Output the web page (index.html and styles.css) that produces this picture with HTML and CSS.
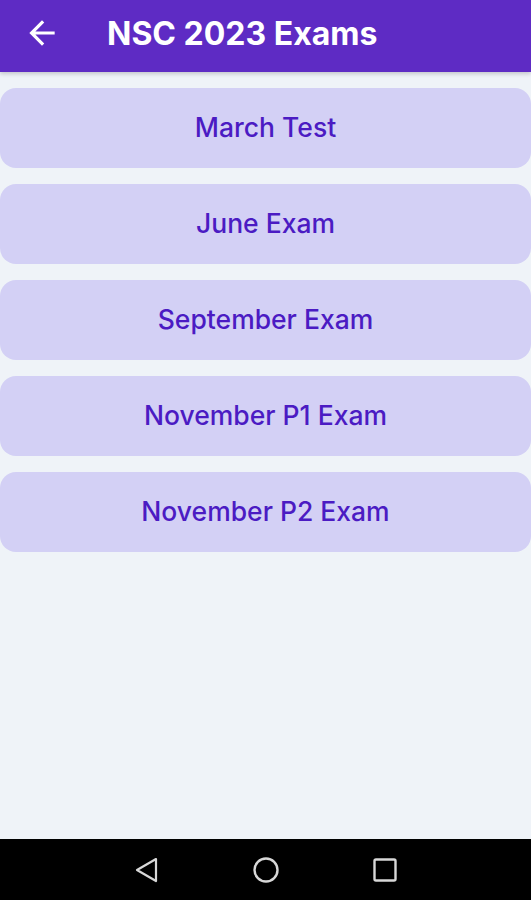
FILE: index.html
```html
<!DOCTYPE html>
<html>
<head>
<meta charset="utf-8">
<link rel="stylesheet" href="styles.css">
</head>
<body>
<div class="screen">
  <header class="appbar">
    <svg class="back" width="38" height="38" viewBox="0 0 24 24"><path d="M20 11H7.83l5.59-5.59L12 4l-8 8 8 8 1.41-1.41L7.83 13H20v-2z" fill="#fff"/></svg>
    <h1 class="title">NSC 2023 Exams</h1>
  </header>
  <main class="list">
    <div class="card">March Test</div>
    <div class="card">June Exam</div>
    <div class="card">September Exam</div>
    <div class="card">November P1 Exam</div>
    <div class="card">November P2 Exam</div>
  </main>
  <nav class="navbar">
    <svg width="26" height="26" viewBox="0 0 26 26"><path d="M22 2 L3 13 L22 24 Z" fill="none" stroke="#d8d8d8" stroke-width="2.2" stroke-linejoin="round"/></svg>
    <svg width="28" height="28" viewBox="0 0 28 28"><circle cx="14" cy="14" r="11.5" fill="none" stroke="#d8d8d8" stroke-width="2.4"/></svg>
    <svg width="26" height="26" viewBox="0 0 26 26"><rect x="2.5" y="2.5" width="21" height="21" rx="1.5" fill="none" stroke="#d8d8d8" stroke-width="2.4"/></svg>
  </nav>
</div>
</body>
</html>
```
FILE: styles.css
```css
html, body {
  margin: 0;
  padding: 0;
}
body {
  font-family: Inter, Roboto, "Liberation Sans", sans-serif;
  background: #eff3f8;
}
.screen {
  width: 531px;
  height: 900px;
  display: flex;
  flex-direction: column;
  background: #eff3f8;
}
.appbar {
  height: 72px;
  background: #5e2bc4;
  display: flex;
  align-items: center;
  padding-left: 23px;
  box-shadow: 0 2px 4px rgba(0,0,0,0.18);
  box-sizing: border-box;
  flex: none;
}
.back {
  margin-top: -6px;
}
.title {
  margin: -6px 0 0 46px;
  color: #fff;
  font-size: 32px;
  font-weight: 700;
  letter-spacing: 0;
}
.list {
  flex: 1;
  display: flex;
  flex-direction: column;
  gap: 16px;
  padding-top: 16px;
}
.card {
  height: 80px;
  background: #d3d0f5;
  border-radius: 16px;
  display: flex;
  align-items: center;
  justify-content: center;
  color: #4b1bc3;
  font-size: 26.5px;
  font-weight: 500;
  padding-bottom: 3px;
  box-sizing: border-box;
}
.navbar {
  height: 61px;
  background: #000;
  flex: none;
  display: flex;
  align-items: center;
  justify-content: center;
  gap: 92px;
}
```
